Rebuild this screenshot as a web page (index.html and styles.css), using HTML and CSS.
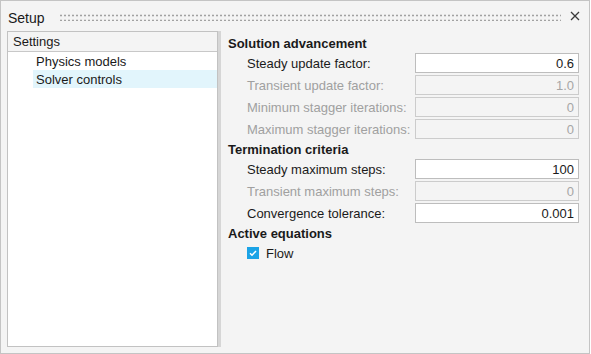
FILE: index.html
```html
<!DOCTYPE html>
<html lang="en">
<head>
    <meta charset="UTF-8">
    <meta name="viewport" content="width=device-width, initial-scale=1.0">
    <title>Setup</title>
    <link rel="stylesheet" href="styles.css">
</head>
<body>
    <div class="window">
        <div class="titlebar">
            <span class="title">Setup</span>
            <div class="grip"></div>
            <svg class="close" width="10" height="10" viewBox="0 0 10 10">
                <path d="M1 1 L9 9 M9 1 L1 9" stroke="#3a3a3a" stroke-width="1.3" fill="none"/>
            </svg>
        </div>

        <div class="main">
            <div class="tree">
                <div class="tree-header">Settings</div>
                <ul class="tree-items">
                    <li>Physics models</li>
                    <li class="selected">Solver controls</li>
                </ul>
            </div>

            <div class="splitter"></div>

            <div class="content">
                <div class="section-title">Solution advancement</div>
                <div class="field">
                    <label>Steady update factor:</label>
                    <input type="text" value="0.6">
                </div>
                <div class="field disabled">
                    <label>Transient update factor:</label>
                    <input type="text" value="1.0" disabled>
                </div>
                <div class="field disabled">
                    <label>Minimum stagger iterations:</label>
                    <input type="text" value="0" disabled>
                </div>
                <div class="field disabled">
                    <label>Maximum stagger iterations:</label>
                    <input type="text" value="0" disabled>
                </div>

                <div class="section-title">Termination criteria</div>
                <div class="field">
                    <label>Steady maximum steps:</label>
                    <input type="text" value="100">
                </div>
                <div class="field disabled">
                    <label>Transient maximum steps:</label>
                    <input type="text" value="0" disabled>
                </div>
                <div class="field">
                    <label>Convergence tolerance:</label>
                    <input type="text" value="0.001">
                </div>

                <div class="section-title">Active equations</div>
                <div class="check-row">
                    <span class="checkbox">
                        <svg width="12" height="12" viewBox="0 0 12 12">
                            <path d="M3 6.2 L5 8.2 L9 4" stroke="#fff" stroke-width="1.5" fill="none"/>
                        </svg>
                    </span>
                    <span>Flow</span>
                </div>
            </div>
        </div>
    </div>
</body>
</html>
```

FILE: styles.css
```css
* {
    box-sizing: border-box;
}
body {
    margin: 0;
    font-family: "Liberation Sans", Arial, sans-serif;
    font-size: 13px;
    color: #1a1a1a;
    background-color: #ffffff;
}
.window {
    width: 590px;
    height: 354px;
    border: 1px solid #c4c4c4;
    background-color: #f4f4f4;
    display: flex;
    flex-direction: column;
}
.titlebar {
    height: 30px;
    display: flex;
    align-items: center;
    padding: 0 9px 0 7px;
}
.title {
    font-size: 14px;
    margin-top: 4px;
}
.grip {
    flex: 1;
    height: 8px;
    margin: 1px 9px 0 14px;
    background-image: radial-gradient(circle, #a2a2a2 0.9px, transparent 1.2px);
    background-size: 4px 5px;
}
.close {
    display: block;
}
.main {
    flex: 1;
    display: flex;
    padding: 0 0 6px 6px;
}
.tree {
    width: 211px;
    border: 1px solid #c2c2c2;
    background-color: #ffffff;
}
.tree-header {
    height: 20px;
    line-height: 20px;
    padding-left: 5px;
    background-color: #f4f4f4;
    border-bottom: 1px solid #c8c8c8;
}
.tree-items {
    list-style: none;
    margin: 0;
    padding: 0;
}
.tree-items li {
    height: 18px;
    line-height: 19px;
    margin-left: 25px;
    padding-left: 3px;
}
.tree-items li.selected {
    background-color: #e2f5fc;
}
.splitter {
    width: 3px;
    background-color: #d6d6d6;
}
.content {
    flex: 1;
    padding: 4px 10px 0 7px;
}
.section-title {
    height: 18px;
    line-height: 18px;
    font-weight: bold;
}
.field {
    display: flex;
    align-items: center;
    height: 20px;
    margin-bottom: 2px;
    padding-left: 19px;
}
.field label {
    flex: 1;
}
.field input {
    width: 164px;
    height: 20px;
    border: 1px solid #bdbdbd;
    background-color: #ffffff;
    font-family: "Liberation Sans", Arial, sans-serif;
    font-size: 13px;
    color: #1a1a1a;
    text-align: right;
    padding: 0 4px;
    outline: none;
}
.field.disabled label {
    color: #a0a0a0;
}
.field.disabled input {
    background-color: #f4f4f4;
    border-color: #cccccc;
    color: #a6a6a6;
}
.check-row {
    display: flex;
    align-items: center;
    gap: 7px;
    height: 20px;
    padding-left: 19px;
}
.checkbox {
    width: 12px;
    height: 12px;
    background-color: #1ba3e6;
    display: flex;
}
```
